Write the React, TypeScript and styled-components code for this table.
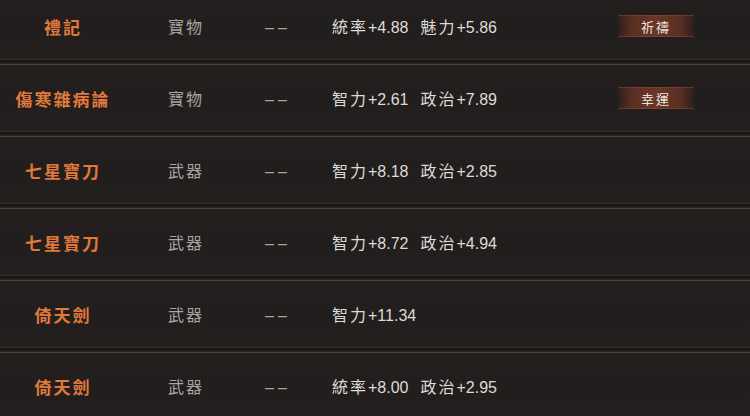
import React from "react";
import styled, { createGlobalStyle } from "styled-components";

const Global = createGlobalStyle`
  html, body { margin: 0; padding: 0; background: #1f1b1a; overflow: hidden; }
  #root { width: 750px; height: 416px; overflow: hidden; }
`;

const List = styled.div`
  display: flex;
  flex-direction: column;
  margin-top: -7px;
  background: #221e1d;
`;

const Row = styled.div`
  display: grid;
  grid-template-columns: 124px 124px 56px 280px 1fr;
  align-items: center;
  height: 66px;
  background: linear-gradient(180deg, #241f1e 0%, #221e1d 50%, #231f1e 100%);
`;

const Divider = styled.div`
  height: 6px;
  box-sizing: border-box;
  border-top: 1px solid #3a3230;
  border-bottom: 1px solid #4a403c;
  background: linear-gradient(180deg, #161312 0%, #1c1817 60%, #2c2624 100%);
`;

const Name = styled.div`
  text-align: center;
  font-family: "Noto Sans CJK TC", "Noto Sans CJK SC", serif;
  font-size: 17px;
  font-weight: 700;
  letter-spacing: 2px;
  padding-left: 2px;
  color: #e07a3c;
`;

const Kind = styled.div`
  text-align: center;
  font-family: "Noto Sans CJK TC", serif;
  font-size: 16px;
  letter-spacing: 2px;
  color: #aaa5a1;
`;

const Dash = styled.div`
  text-align: center;
  padding-top: 4px;
  font-family: "Liberation Sans", sans-serif;
  font-size: 16px;
  letter-spacing: 4px;
  text-indent: 4px;
  color: #aaa5a1;
`;

const Stats = styled.div`
  display: flex;
  gap: 12px;
  padding-left: 28px;
  font-family: "Liberation Sans", "Noto Sans CJK TC", sans-serif;
  font-size: 16px;
  color: #dedad6;
`;

const Stat = styled.span`
  white-space: nowrap;
`;

const Label = styled.span`
  font-family: "Noto Sans CJK TC", sans-serif;
  letter-spacing: 2px;
`;

const BadgeCell = styled.div`
  display: flex;
  padding-left: 34px;
  align-self: start;
  padding-top: 22px;
`;

const Badge = styled.div`
  width: 76px;
  height: 20px;
  display: flex;
  align-items: center;
  justify-content: center;
  font-family: "Noto Sans CJK TC", serif;
  font-size: 13px;
  letter-spacing: 2px;
  color: #ece4dc;
  background: linear-gradient(90deg, rgba(70,34,24,0.3) 0%, #5a2e22 18%, #6a3627 50%, #5a2e22 82%, rgba(70,34,24,0.3) 100%);
  border-top: 1px solid rgba(140,80,60,0.5);
  border-bottom: 1px solid rgba(140,80,60,0.5);
`;

type Item = { name: string; kind: string; stats: [string, string][]; badge?: string };

const items: Item[] = [
  { name: "禮記", kind: "寶物", stats: [["統率", "+4.88"], ["魅力", "+5.86"]], badge: "祈禱" },
  { name: "傷寒雜病論", kind: "寶物", stats: [["智力", "+2.61"], ["政治", "+7.89"]], badge: "幸運" },
  { name: "七星寶刀", kind: "武器", stats: [["智力", "+8.18"], ["政治", "+2.85"]] },
  { name: "七星寶刀", kind: "武器", stats: [["智力", "+8.72"], ["政治", "+4.94"]] },
  { name: "倚天劍", kind: "武器", stats: [["智力", "+11.34"]] },
  { name: "倚天劍", kind: "武器", stats: [["統率", "+8.00"], ["政治", "+2.95"]] },
];

export default function App() {
  return (
    <>
      <Global />
      <List>
        {items.map((it, i) => (
          <React.Fragment key={i}>
            {i > 0 && <Divider />}
            <Row>
              <Name>{it.name}</Name>
              <Kind>{it.kind}</Kind>
              <Dash>––</Dash>
              <Stats>
                {it.stats.map(([l, v], j) => (
                  <Stat key={j}>
                    <Label>{l}</Label>
                    {v}
                  </Stat>
                ))}
              </Stats>
              <BadgeCell>{it.badge && <Badge>{it.badge}</Badge>}</BadgeCell>
            </Row>
          </React.Fragment>
        ))}
      </List>
    </>
  );
}
